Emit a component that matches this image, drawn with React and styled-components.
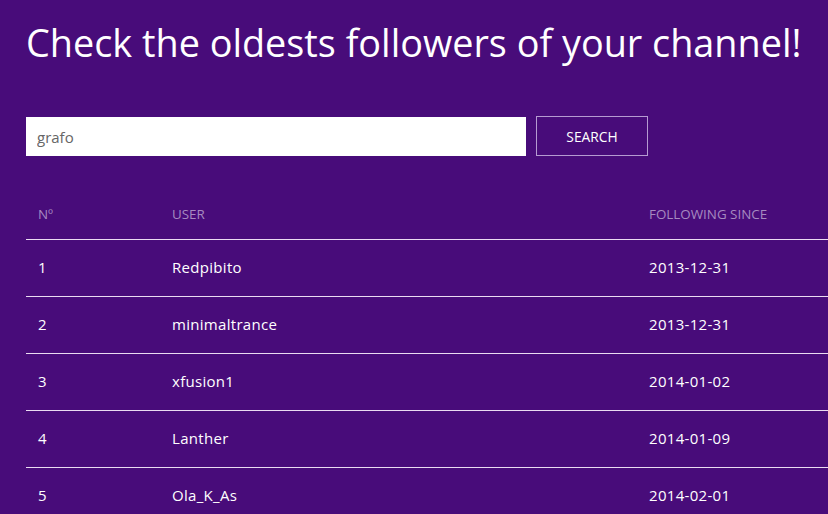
import styled, { createGlobalStyle } from 'styled-components';

const GlobalStyle = createGlobalStyle`
  html, body {
    margin: 0;
    padding: 0;
    background: #480c7a;
  }
  body {
    font-family: "Open Sans", "Noto Sans", sans-serif;
    color: #ffffff;
  }
`;

const followers = [
  { id: 1, user: 'Redpibito', since: '2013-12-31' },
  { id: 2, user: 'minimaltrance', since: '2013-12-31' },
  { id: 3, user: 'xfusion1', since: '2014-01-02' },
  { id: 4, user: 'Lanther', since: '2014-01-09' },
  { id: 5, user: 'Ola_K_As', since: '2014-02-01' },
];

const Page = styled.main`
  padding: 18px 0 0 26px;
`;

const Title = styled.h1`
  margin: 0;
  font-size: 37.8px;
  font-weight: 400;
  line-height: 50px;
  white-space: nowrap;
`;

const SearchBar = styled.form`
  display: flex;
  gap: 10px;
  margin-top: 48px;
`;

const Input = styled.input`
  box-sizing: border-box;
  width: 500px;
  height: 39px;
  margin-top: 1px;
  border: none;
  outline: none;
  padding: 0 11px;
  font-family: inherit;
  font-size: 15px;
  color: #666;
  background: #fff;
`;

const Button = styled.button`
  box-sizing: border-box;
  width: 112px;
  height: 40px;
  background: transparent;
  border: 1px solid #b69bd2;
  color: #fff;
  font-family: inherit;
  font-size: 13.8px;
  text-transform: uppercase;
  cursor: pointer;
`;

const Table = styled.div`
  margin-top: 39px;
`;

const Row = styled.div`
  display: grid;
  grid-template-columns: 134px 477px 1fr;
  align-items: center;
  box-sizing: border-box;
  height: ${p => (p.$head ? '45px' : '57px')};
  padding-bottom: ${p => (p.$head ? '7px' : '3px')};
  border-bottom: 1px solid #eadcf2;
  padding-left: 12px;
  font-size: ${p => (p.$head ? '13.4px' : '15px')};
  letter-spacing: ${p => (p.$head ? '0' : '0.3px')};
  color: ${p => (p.$head ? '#a68ac0' : '#fff')};
  text-transform: ${p => (p.$head ? 'uppercase' : 'none')};
`;

export default function App() {
  return (
    <>
      <GlobalStyle />
      <Page>
        <Title>Check the oldests followers of your channel!</Title>
        <SearchBar onSubmit={e => e.preventDefault()}>
          <Input defaultValue="grafo" />
          <Button type="submit">Search</Button>
        </SearchBar>
        <Table>
          <Row $head>
            <span>Nº</span>
            <span>User</span>
            <span>Following since</span>
          </Row>
          {followers.map(f => (
            <Row key={f.id}>
              <span>{f.id}</span>
              <span>{f.user}</span>
              <span>{f.since}</span>
            </Row>
          ))}
        </Table>
      </Page>
    </>
  );
}
